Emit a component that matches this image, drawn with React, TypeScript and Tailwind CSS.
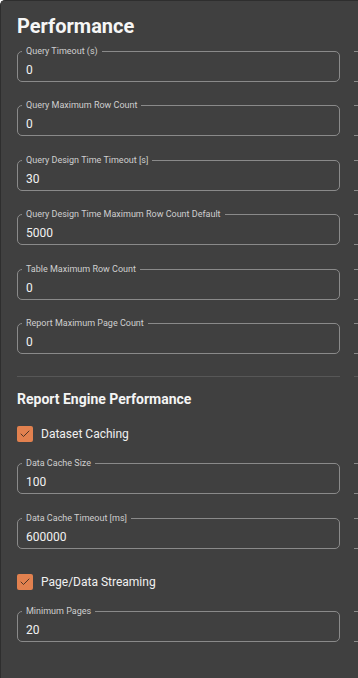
import { Check } from "lucide-react";

type Field = { label: string; value: string };

const queryFields: Field[] = [
  { label: "Query Timeout (s)", value: "0" },
  { label: "Query Maximum Row Count", value: "0" },
  { label: "Query Design Time Timeout [s]", value: "30" },
  { label: "Query Design Time Maximum Row Count Default", value: "5000" },
  { label: "Table Maximum Row Count", value: "0" },
  { label: "Report Maximum Page Count", value: "0" },
];

const cacheFields: Field[] = [
  { label: "Data Cache Size", value: "100" },
  { label: "Data Cache Timeout [ms]", value: "600000" },
];

const streamFields: Field[] = [{ label: "Minimum Pages", value: "20" }];

function OutlinedField({ label, value }: Field) {
  return (
    <fieldset className="h-[36px] border border-[#8a8a8a] rounded-[5px] pl-[8px] pr-[8px]">
      {label ? (
        <legend className="ml-[-4px] px-[4px] text-[9px] leading-[11px] text-[#cfcfcf]">
          {label}
        </legend>
      ) : (
        <legend className="h-[11px] w-0 p-0" />
      )}
      <div className="pt-[5px] text-[12px] leading-[16px] text-[#f2f2f2]">{value}</div>
    </fieldset>
  );
}

function FieldStack({ fields }: { fields: Field[] }) {
  return (
    <div className="flex flex-col gap-[18.6px]">
      {fields.map((f, i) => (
        <OutlinedField key={i} {...f} />
      ))}
    </div>
  );
}

function CheckRow({ label }: { label: string }) {
  return (
    <label className="flex items-center gap-[8px] h-[16px]">
      <span className="w-[16px] h-[16px] rounded-[2px] bg-[#e2814f] flex items-center justify-center">
        <Check className="w-[12px] h-[12px] text-[#3a2a20]" strokeWidth={1.75} />
      </span>
      <span className="text-[12px] text-[#f0f0f0]">{label}</span>
    </label>
  );
}

function Column({ blank }: { blank?: boolean }) {
  const strip = (list: Field[]) =>
    blank ? list.map(() => ({ label: "", value: "" })) : list;
  return (
    <div className="w-[323px] shrink-0 flex flex-col">
      <div className="mt-[5.5px]">
        <FieldStack fields={strip(queryFields)} />
      </div>
      <div className="mt-[21.5px] h-px bg-[#575757]" />
      <h3 className="mt-[12px] h-[20px] text-[14px] leading-[20px] font-bold text-[#f4f4f4]">
        {blank ? "" : "Report Engine Performance"}
      </h3>
      <div className="mt-[17px] h-[16px]">{!blank && <CheckRow label="Dataset Caching" />}</div>
      <div className="mt-[16.5px]">
        <FieldStack fields={strip(cacheFields)} />
      </div>
      <div className="mt-[24.9px] h-[16px]">
        {!blank && <CheckRow label="Page/Data Streaming" />}
      </div>
      <div className="mt-[16.5px]">
        <FieldStack fields={strip(streamFields)} />
      </div>
    </div>
  );
}

export default function App() {
  return (
    <div
      className="w-[358px] h-[678px] overflow-hidden bg-[#404040] border-l border-t border-[#2e2e2e] rounded-tl-[5px] pl-[16px] pt-[11px]"
      style={{ fontFamily: "Roboto, 'Noto Sans', sans-serif" }}
    >
      <h2 className="h-[28px] text-[20px] leading-[28px] font-bold text-[#f6f6f6]">
        Performance
      </h2>
      <div className="flex gap-[14px]">
        <Column />
        <div className="w-[323px] shrink-0 overflow-hidden">
          <div className="-ml-[10px]">
            <Column blank />
          </div>
        </div>
      </div>
    </div>
  );
}
